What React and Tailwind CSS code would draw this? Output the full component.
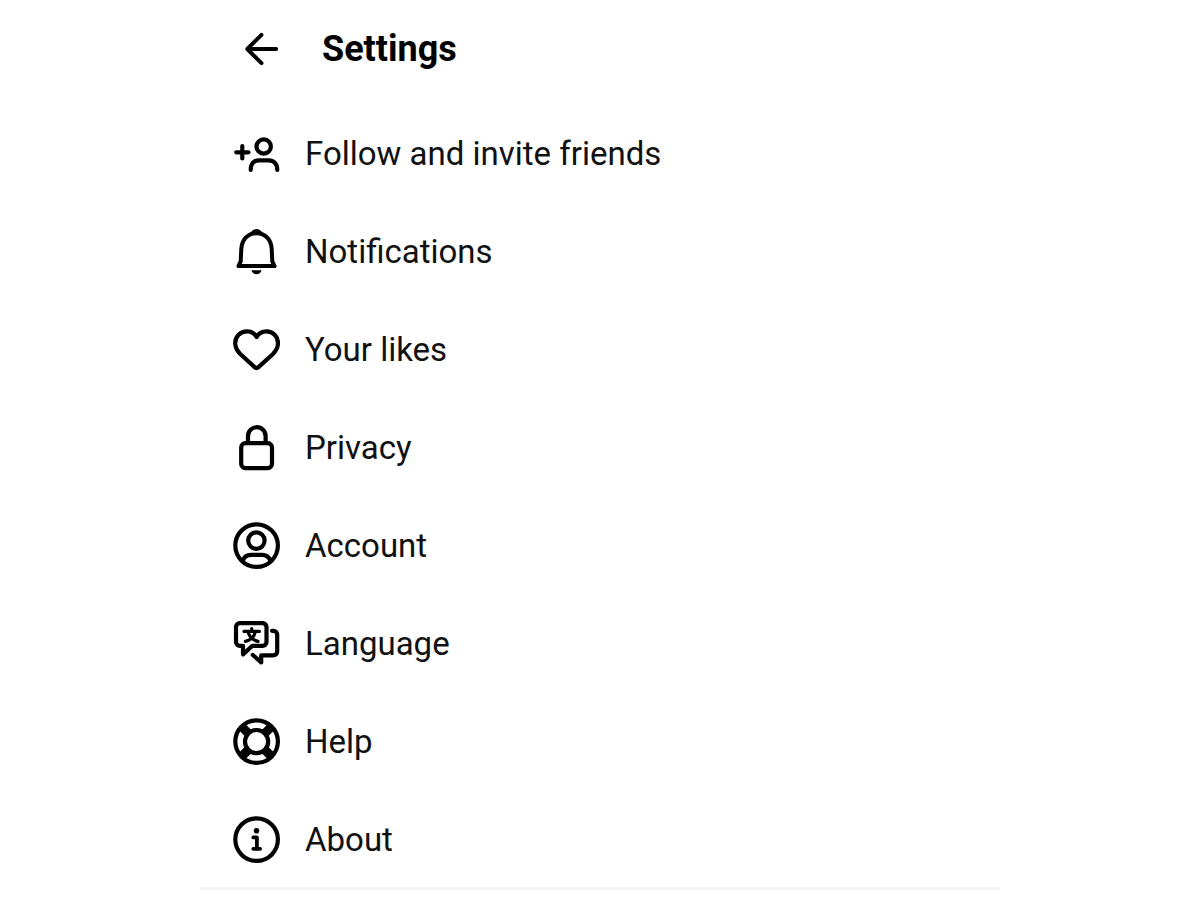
/**
 * Settings screen.
 * Header with a back button, then a plain list of links.
 */
import React from 'react'

const Icon = ({ children }) => (
  <svg
    viewBox="0 0 48 48"
    className="w-12 h-12 flex-shrink-0"
    fill="none"
    stroke="currentColor"
    strokeWidth="4.2"
    strokeLinecap="round"
    strokeLinejoin="round"
    aria-hidden="true"
  >
    {children}
  </svg>
)

const BackIcon = () => (
  <Icon>
    <path d="M36.2 24H7.5M21.5 9.8L7.3 24l14.2 14.2" strokeWidth="3.9" />
  </Icon>
)

const InviteIcon = () => (
  <Icon>
    <path d="M4.2 22.3h12.3M10.3 16.2v12.3" />
    <circle cx="31.7" cy="16.5" r="7.2" />
    <path d="M18.7 40C18.7 33.6 22 30.3 27 30.3h9.6c5 0 8.7 3.3 8.7 9.7" />
  </Icon>
)

const BellIcon = () => (
  <Icon>
    <path d="M6.4 38.1L8.7 33.5L9.3 21C9.8 11.8 15.5 5.2 24.5 5.2S39.2 11.8 39.7 21l.6 12.5 2.3 4.6z" strokeWidth="4" />
    <path d="M18.6 6C20.4 3 22.4 1.8 24.5 1.8S28.6 3 30.4 6z" fill="currentColor" strokeWidth="1.6" />
    <path d="M19.4 42.2h10.2c-.8 2.7-2.8 4-5.1 4s-4.3-1.3-5.1-4z" fill="currentColor" stroke="none" />
  </Icon>
)

const HeartIcon = () => (
  <Icon>
    <path
      d="M24.6 11C22.6 7.2 19 5.3 14.8 5.3C8.3 5.3 3.2 10.4 3.2 17c0 4.5 1.8 7.8 5.3 11.2l14.2 12.9q1.9 1.7 3.8 0l14.2-12.9C44.2 24.8 46 21.5 46 17c0-6.6-5-11.7-11.5-11.7c-4.2 0-7.9 1.9-9.9 5.7z"
    />
  </Icon>
)

const LockIcon = () => (
  <Icon>
    <rect x="9.2" y="19.2" width="30.8" height="24.9" rx="4.2" />
    <path d="M16 19V12a8.8 8.8 0 0 1 17.6 0v7" />
  </Icon>
)

const AccountIcon = () => (
  <Icon>
    <circle cx="24.6" cy="23.6" r="21.3" />
    <circle cx="24.4" cy="18.6" r="8.2" />
    <path d="M10.8 38.8c1.2-4 4.4-6 8.2-6h11c3.8 0 7 2 8.4 6" />
  </Icon>
)

const LanguageIcon = () => (
  <Icon>
    <path d="M7.8 3.2h22.9a3.8 3.8 0 0 1 3.8 3.8v15a3.8 3.8 0 0 1-3.8 3.8H20.4L11 34.4v-8.6H7.8A3.8 3.8 0 0 1 4 22V7a3.8 3.8 0 0 1 3.8-3.8z" />
    <path d="M40 10.8h1.4a3.8 3.8 0 0 1 3.8 3.8v17a3.8 3.8 0 0 1-3.8 3.8H29.2v7L20.8 35" />
    <path
      d="M12 11.4h15.4M19.7 8.6v2.6M16.2 12.4c1.2 4.4 4.4 7.6 9.8 9M23.2 12.4c-1.2 4.4-4.4 7.6-9.8 9"
      strokeWidth="3.2"
    />
  </Icon>
)

const HelpIcon = () => (
  <Icon>
    <circle cx="24.6" cy="23.6" r="21.3" />
    <circle cx="24.6" cy="23.6" r="11.6" />
    <path
      d="M16.4 15.4l-6-6M32.8 15.4l6-6M16.4 31.8l-6 6M32.8 31.8l6 6"
      strokeWidth="9"
      strokeLinecap="butt"
    />
  </Icon>
)

const AboutIcon = () => (
  <Icon>
    <circle cx="24.6" cy="23.6" r="21.3" />
    <circle cx="24.5" cy="14.8" r="2.8" fill="currentColor" stroke="none" />
    <path d="M21.3 21.4h3.6v11.2M21.3 32.8h6.8" strokeWidth="3.8" />
  </Icon>
)

const ITEMS = [
  { label: 'Follow and invite friends', href: '#invite', icon: InviteIcon },
  { label: 'Notifications', href: '#notifications', icon: BellIcon },
  { label: 'Your likes', href: '#likes', icon: HeartIcon },
  { label: 'Privacy', href: '#privacy', icon: LockIcon },
  { label: 'Account', href: '#account', icon: AccountIcon },
  { label: 'Language', href: '#language', icon: LanguageIcon },
  { label: 'Help', href: '#help', icon: HelpIcon },
  { label: 'About', href: '#about', icon: AboutIcon },
]

const SettingsItem = ({ item }) => (
  <li>
    <a href={item.href} className="flex items-center gap-[25px] h-[98px] px-8 text-[33px] leading-10 text-[#111111]">
      <span className="text-black">
        <item.icon />
      </span>
      {item.label}
    </a>
  </li>
)

export default function App() {
  return (
    <div className="min-h-screen bg-white text-black font-['Roboto',sans-serif]">
      <div className="max-w-[800px] mx-auto border-b-3 border-[#f3f3f3]">
        <header className="flex items-center gap-[34px] h-[97px] mb-2 px-10">
          <button type="button" aria-label="Back">
            <BackIcon />
          </button>
          <h1 className="text-4xl font-bold">Settings</h1>
        </header>

        <nav aria-label="Settings" className="-mb-0.5">
          <ul>
            {ITEMS.map((item) => (
              <SettingsItem key={item.href} item={item} />
            ))}
          </ul>
        </nav>
      </div>
    </div>
  )
}
